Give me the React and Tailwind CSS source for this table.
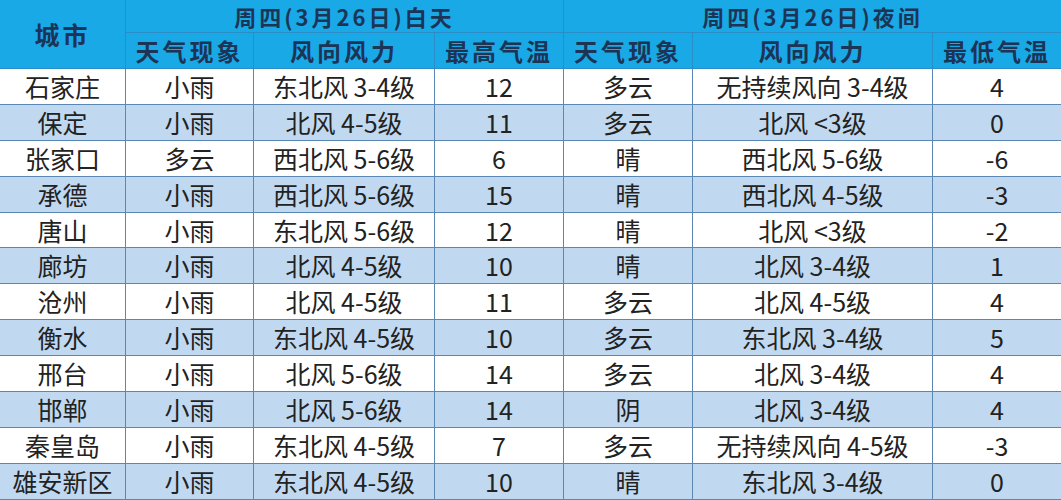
const rows = [
  ['石家庄', '小雨', '东北风 3-4级', '12', '多云', '无持续风向 3-4级', '4'],
  ['保定', '小雨', '北风 4-5级', '11', '多云', '北风 <3级', '0'],
  ['张家口', '多云', '西北风 5-6级', '6', '晴', '西北风 5-6级', '-6'],
  ['承德', '小雨', '西北风 5-6级', '15', '晴', '西北风 4-5级', '-3'],
  ['唐山', '小雨', '东北风 5-6级', '12', '晴', '北风 <3级', '-2'],
  ['廊坊', '小雨', '北风 4-5级', '10', '晴', '北风 3-4级', '1'],
  ['沧州', '小雨', '北风 4-5级', '11', '多云', '北风 4-5级', '4'],
  ['衡水', '小雨', '东北风 4-5级', '10', '多云', '东北风 3-4级', '5'],
  ['邢台', '小雨', '北风 5-6级', '14', '多云', '北风 3-4级', '4'],
  ['邯郸', '小雨', '北风 5-6级', '14', '阴', '北风 3-4级', '4'],
  ['秦皇岛', '小雨', '东北风 4-5级', '7', '多云', '无持续风向 4-5级', '-3'],
  ['雄安新区', '小雨', '东北风 4-5级', '10', '晴', '东北风 3-4级', '0'],
];

const cols = 'grid grid-cols-[126px_128px_181px_129px_129px_240px_128px]';
const head = 'flex items-center justify-center border-r border-b border-[#2a8dc8] text-[#1c3556] font-bold leading-none';

function App() {
  return (
    <div className="w-[1061px] h-[500px] overflow-hidden bg-white font-['Noto_Sans_CJK_SC',sans-serif]">
      {/* header */}
      <div className={`${cols} grid-rows-[33px_36px] bg-[#1aa9e7]`}>
        <div className={`${head} row-span-2 text-[25px] tracking-[3px]`}>城市</div>
        <div className={`${head} col-span-3 text-[22px] tracking-[3px]`}>周四(3月26日)白天</div>
        <div className={`${head} col-span-3 text-[22px] tracking-[3px] border-r-0`}>周四(3月26日)夜间</div>
        <div className={`${head} text-[24px] tracking-[3px]`}>天气现象</div>
        <div className={`${head} text-[24px] tracking-[3px]`}>风向风力</div>
        <div className={`${head} text-[24px] tracking-[3px]`}>最高气温</div>
        <div className={`${head} text-[24px] tracking-[3px]`}>天气现象</div>
        <div className={`${head} text-[24px] tracking-[3px]`}>风向风力</div>
        <div className={`${head} text-[24px] tracking-[3px] border-r-0`}>最低气温</div>
      </div>

      {/* data rows */}
      {rows.map((r, i) => (
        <div
          key={r[0]}
          className={`${cols} h-[35.9px] ${i % 2 === 1 ? 'bg-[#c1d9f0]' : 'bg-white'}`}
        >
          {r.map((c, j) => (
            <div
              key={j}
              className={`flex items-center justify-center border-b border-[#5a87b3] text-[25px] leading-none text-[#222] whitespace-nowrap ${j < 6 ? 'border-r' : ''}`}
            >
              {c}
            </div>
          ))}
        </div>
      ))}
    </div>
  );
}

export default App;
